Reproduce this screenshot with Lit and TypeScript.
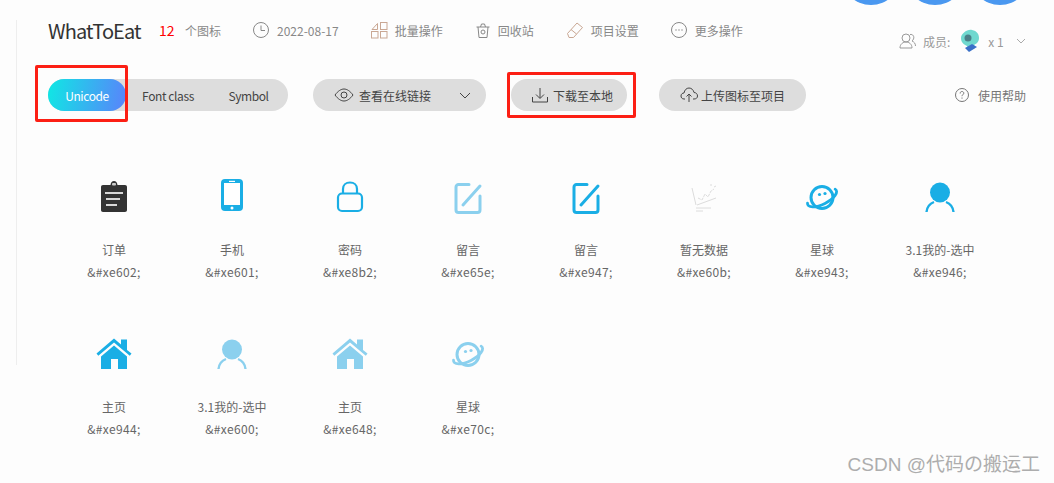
import { LitElement, html, css, svg } from "lit";
import { customElement } from "lit/decorators.js";

const BLUE = "#1aaee5";
const LIGHT = "#8bd0ee";

const house = (c: string) => svg`<path fill="${c}" d="M0.500 17.500 18 2.500 25 8.500V3.500H31V14L35.500 17.500 33.800 19.800 18 6.500 2.300 19.800Z"/><path fill="${c}" d="M18 9.500 31 20.500V33H22V23H15V33H5V20.500Z"/>`;
const person = (c: string) => svg`<circle cx="18" cy="13.500" r="10" fill="${c}"/><path fill="none" stroke="${c}" stroke-width="2.400" d="M4.500 33c.5-5 3.500-8.500 7.500-10M31.500 33c-.5-5-3.500-8.500-7.500-10"/>`;
const planet = (c: string) => svg`<g transform="translate(0 1.500)"><circle cx="18" cy="17" r="11" fill="none" stroke="${c}" stroke-width="3"/><g transform="rotate(-27 18 17)"><path fill="none" stroke="${c}" stroke-width="2.800" stroke-linecap="round" d="M2.500 15.500A16 6.500 0 1 0 33.500 15.500"/></g><circle cx="15.500" cy="14" r="1.600" fill="${c}"/><circle cx="21" cy="13" r="1.600" fill="${c}"/></g>`;
const edit = (c: string) => svg`<path fill="none" stroke="${c}" stroke-width="3" stroke-linecap="round" d="M19 5.500H8.500a2.500 2.500 0 0 0-2.500 2.500v23a2.500 2.500 0 0 0 2.500 2.500h19a2.500 2.500 0 0 0 2.500-2.500V17"/><path fill="none" stroke="${c}" stroke-width="3" stroke-linecap="round" d="M13 26 30 7"/>`;

const icons = {
  order: svg`<path fill="#333" d="M7 6h7.500c.3-2.600 1.600-4 3.500-4s3.200 1.400 3.500 4H29c1.200 0 2 .8 2 2v23c0 1.200-.8 2-2 2H7c-1.200 0-2-.8-2-2V8c0-1.200.8-2 2-2Z"/><rect x="16" y="4" width="4" height="2.500" rx="1" fill="#ccc"/><path stroke="#d8d8d8" stroke-width="1.800" d="M9 14h18M10 20h14M10 26h11"/>`,
  phone: svg`<rect x="7" y="0" width="22" height="32" rx="4" fill="${BLUE}"/><rect x="10" y="4" width="16" height="22" fill="#fff"/><rect x="15" y="1.800" width="6" height="1.200" fill="#fff"/><circle cx="18" cy="29" r="1.500" fill="#fff"/>`,
  lock: svg`<rect x="6" y="14.500" width="24" height="17.500" rx="4" fill="none" stroke="${BLUE}" stroke-width="2.200"/><path fill="none" stroke="${BLUE}" stroke-width="2.200" d="M11 14.500v-4.500c0-4 3-6.500 7-6.500s7 2.500 7 6.500v4.500"/>`,
  chart: svg`<g fill="none" stroke="#dcdcdc" stroke-width="1"><path d="M6 9l4 17M11 26l19-7M10 29h15M10 32h7"/><path d="M12 19l4 2 3-6 3 3 3-6 3-2" stroke-dasharray="3 1"/><path d="M25 5v2M28 8l2-1"/></g>`,
};

const items: [string, string, unknown][] = [
  ["订单", "&#xe602;", icons.order],
  ["手机", "&#xe601;", icons.phone],
  ["密码", "&#xe8b2;", icons.lock],
  ["留言", "&#xe65e;", edit(LIGHT)],
  ["留言", "&#xe947;", edit(BLUE)],
  ["暂无数据", "&#xe60b;", icons.chart],
  ["星球", "&#xe943;", planet(BLUE)],
  ["3.1我的-选中", "&#xe946;", person(BLUE)],
  ["主页", "&#xe944;", house(BLUE)],
  ["3.1我的-选中", "&#xe600;", person(LIGHT)],
  ["主页", "&#xe648;", house(LIGHT)],
  ["星球", "&#xe70c;", planet(LIGHT)],
];

const mini = (inner: unknown, w = 18) =>
  html`<svg class="mini" width="${w}" height="${w}" viewBox="0 0 ${w} ${w}" fill="none" stroke="currentColor" stroke-width="1">${inner}</svg>`;

@customElement("app-root")
export class AppRoot extends LitElement {
  static styles = css`
    :host {
      display: block;
      width: 1054px;
      height: 483px;
      position: relative;
      overflow: hidden;
      background: #fdfdfd;
      font-family: "Noto Sans CJK SC", "Noto Sans", sans-serif;
      color: #666;
      font-size: 12px;
    }
    .rule {
      position: absolute;
      left: 16px;
      top: 20px;
      height: 345px;
      width: 1px;
      background: #eeeeee;
    }
    .blob {
      position: absolute;
      top: -55px;
      width: 60px;
      height: 60px;
      border-radius: 50%;
      background: #4a98f0;
    }
    .page {
      padding: 14px 0 0 48px;
      display: flex;
      flex-direction: column;
    }
    .head {
      display: flex;
      align-items: center;
      height: 32px;
      color: #888;
    }
    .title {
      font-size: 20px;
      letter-spacing: -0.9px;
      color: #333;
      width: 111px;
    }
    .count {
      color: #f00;
      font-size: 14px;
      width: 26px;
    }
    .meta {
      display: flex;
      align-items: center;
      gap: 7px;
    }
    .meta1 { margin-left: 31px; }
    .meta2 { margin-left: 31px; }
    .meta3 { margin-left: 32px; }
    .meta4 { margin-left: 32px; }
    .meta5 { margin-left: 31px; }
    .member {
      position: absolute;
      top: 29px;
      left: 899px;
      display: flex;
      align-items: center;
      color: #999;
    }
    .toolbar {
      display: flex;
      align-items: center;
      margin-top: 33px;
      height: 32px;
      color: #444;
    }
    .pill {
      height: 32px;
      border-radius: 16px;
      background: #dddddd;
      display: flex;
      align-items: center;
    }
    .tabs { width: 240px; }
    .tab {
      height: 32px;
      display: flex;
      align-items: center;
      justify-content: center;
      border-radius: 16px;
      font-size: 12px;
      letter-spacing: -0.4px;
    }
    .tab.on {
      width: 78px;
      color: #fff;
      background: linear-gradient(100deg, #0fe8e4, #5a82fb);
    }
    .tab.f { width: 84px; }
    .tab.s { width: 77px; }
    .link { width: 173px; margin-left: 25px; padding-left: 21px; box-sizing: border-box; gap: 5px; }
    .dl { width: 116px; margin-left: 25px; padding-left: 20px; box-sizing: border-box; gap: 4px; }
    .up { width: 147px; margin-left: 32px; padding-left: 21px; box-sizing: border-box; gap: 3px; }
    .help {
      margin-left: 148px;
      display: flex;
      align-items: center;
      gap: 8px;
      color: #777;
    }
    .chev { margin-left: 23px; }
    .grid {
      display: grid;
      grid-template-columns: repeat(8, 118px);
      grid-auto-rows: 157px;
      margin: 64px 0 0 7px;
    }
    .cell {
      display: flex;
      flex-direction: column;
      align-items: center;
      color: #666;
      text-align: center;
    }
    .cell svg { display: block; margin-top: 4px; }
    .name { margin-top: 24px; height: 22px; line-height: 22px; }
    .code { height: 22px; line-height: 22px; letter-spacing: 0.35px; }
    .mark {
      position: absolute;
      border: 3px solid #fc1f14;
      border-radius: 2px;
      box-sizing: border-box;
    }
    .wm {
      position: absolute;
      right: 14px;
      top: 453px;
      font-family: "Liberation Sans", "Noto Sans CJK SC", sans-serif;
      font-size: 19px;
      line-height: 24px;
      color: #adadad;
    }
    .member-label { margin-left: 6px; }
    .avatar { margin: 0 8px 0 10px; }
    .member-chev { margin-left: 12px; }
    .mini { display: block; flex: none; }
  `;

  render() {
    return html`
      <div class="rule"></div>
      <div class="blob" style="left:841px"></div>
      <div class="blob" style="left:905px"></div>
      <div class="blob" style="left:970px"></div>
      <div class="page">
        <div class="head">
          <span class="title">WhatToEat</span>
          <span class="count">12</span>
          <span>个图标</span>
          <span class="meta meta1">${mini(svg`<circle cx="9" cy="9" r="7.500"/><path d="M9 4.500V9.500H13"/>`)}2022-08-17</span>
          <span class="meta meta2">${mini(svg`<g stroke="#c9a793"><path d="M2 8.500 7.500 2.500V8.500Z"/><rect x="10.500" y="1.500" width="6.500" height="7"/><rect x="1.500" y="10.500" width="6.500" height="6.500"/><rect x="10.500" y="10.500" width="6.500" height="6.500"/></g>`)}批量操作</span>
          <span class="meta meta3">${mini(svg`<path stroke="#888" d="M1.500 5h13M3 5l1 10.500h8L13 5M5.500 5l1-3h3l1 3"/><circle cx="8" cy="10" r="2"/>`, 16)}回收站</span>
          <span class="meta meta4">${mini(svg`<path stroke="#c9a793" d="M1.500 12.500 11 2l5.500 4.500L7.500 16.500H3ZM5 8.500 10.500 13"/>`)}项目设置</span>
          <span class="meta meta5">${mini(svg`<circle cx="9" cy="9" r="7.500"/><path d="M5.500 9h1M8.500 9h1M11.500 9h1" stroke-width="1.400"/>`)}更多操作</span>
        </div>
        <div class="member">
          ${mini(svg`<circle cx="7" cy="6" r="4"/><path d="M1 16c0-4 3-6 6-6s6 2 6 6zM11 2.500c3-.5 4.500 2 3.500 4.500-.4 1-1 1.500-1.500 2 2 .8 3.500 2.500 3.500 5"/>`)}
          <span class="member-label">成员:</span>
          <svg class="avatar" width="20" height="24" viewBox="0 0 20 24"><path fill="#6fd8cf" d="M12 1c5 1 7 4 7 8s-3 6-5 7l1 3-6 3-2-5C3 15 1 13 1 9c0-4 6-9 11-8Z"/><path fill="#3a70c8" d="M5 19l7-4 5 3-8 5Z"/><circle cx="8" cy="9" r="3.500" fill="#4a7f88"/></svg>
          <span>x 1</span>
          <svg class="member-chev" width="10" height="6" viewBox="0 0 10 6" fill="none" stroke="#aaa"><path d="M1 1l4 4 4-4"/></svg>
        </div>
        <div class="toolbar">
          <div class="pill tabs">
            <div class="tab on">Unicode</div>
            <div class="tab f">Font class</div>
            <div class="tab s">Symbol</div>
          </div>
          <div class="pill link">
            <svg class="mini" width="20" height="14" viewBox="0 0 20 14" fill="none" stroke="#444"><path d="M1 7c3-4 6-6 9-6s6 2 9 6c-3 4-6 6-9 6s-6-2-9-6Z"/><circle cx="10" cy="7" r="3"/></svg>
            <span>查看在线链接</span>
            <svg class="chev" width="12" height="7" viewBox="0 0 12 7" fill="none" stroke="#444"><path d="M1 1l5 5 5-5"/></svg>
          </div>
          <div class="pill dl">
            ${mini(svg`<path stroke="#444" d="M1.500 11v5h15v-5M9 2v10M5 8.500l4 4 4-4"/>`)}
            <span>下载至本地</span>
          </div>
          <div class="pill up">
            ${mini(svg`<path stroke="#444" d="M5 13H4C2 13 1 11.500 1 10c0-2 1.500-3 3-3 .5-3 2.500-5 5-5s4.500 2 5 4.500c2 0 3.500 1.500 3.500 3.500S16 13 14 13h-1M9 8v8M6.500 10.500 9 8l2.500 2.500"/>`)}
            <span>上传图标至项目</span>
          </div>
          <div class="help">
            ${mini(svg`<circle cx="8" cy="8" r="6.500"/><path d="M6.200 6.500C6.200 5 7 4.500 8 4.500s1.800.7 1.800 1.700c0 1.300-1.800 1.500-1.800 3M8 10.500v1.200"/>`, 16)}
            <span>使用帮助</span>
          </div>
        </div>
        <div class="grid">
          ${items.map(
            ([n, c, i]) => html`<div class="cell">
              <svg width="36" height="36" viewBox="0 0 36 36">${i}</svg>
              <div class="name">${n}</div>
              <div class="code">${c}</div>
            </div>`
          )}
        </div>
      </div>
      <div class="mark" style="left:35px;top:65px;width:93px;height:57px"></div>
      <div class="mark" style="left:507px;top:72px;width:129px;height:46px"></div>
      <div class="wm">CSDN @代码の搬运工</div>
    `;
  }
}
